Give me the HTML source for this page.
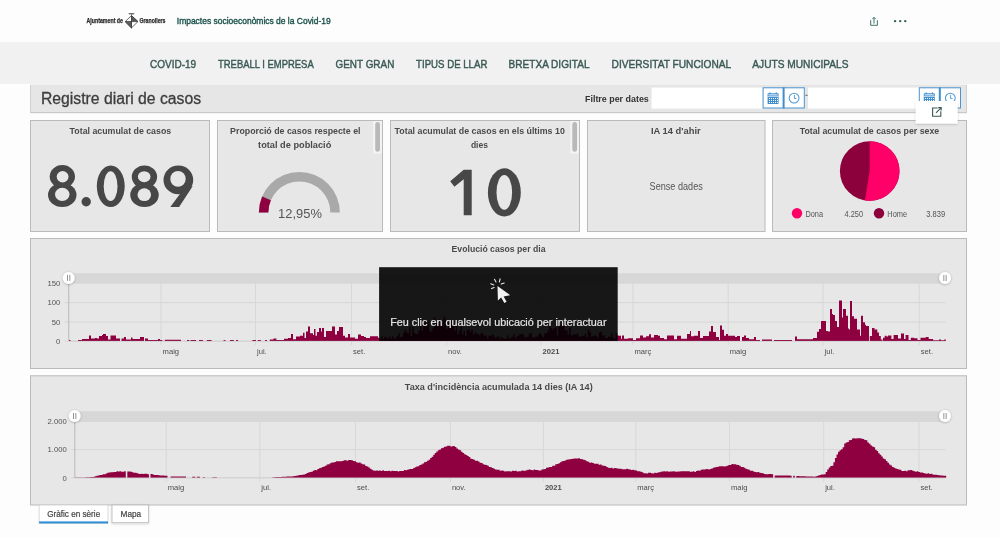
<!DOCTYPE html>
<html><head><meta charset="utf-8"><style>
html,body{margin:0;padding:0;background:#fdfdfd;width:1000px;height:537px;overflow:hidden}
svg{display:block;font-family:"Liberation Sans", sans-serif;will-change:transform;filter:blur(0.5px)}
</style></head><body>
<svg width="1000" height="537" viewBox="0 0 1000 537">
<defs>
<filter id="sh" x="-20%" y="-20%" width="140%" height="160%"><feDropShadow dx="0" dy="1" stdDeviation="1" flood-color="#000" flood-opacity="0.18"/></filter>
<filter id="sh2" x="-50%" y="-50%" width="200%" height="200%"><feDropShadow dx="0" dy="0.5" stdDeviation="0.8" flood-color="#000" flood-opacity="0.3"/></filter>
</defs>
<rect x="0" y="0" width="1000" height="537" fill="#fdfdfd"/><text x="86.50" y="23.20" font-size="6.3" font-weight="bold" fill="#2a2a2a" textLength="36.50" lengthAdjust="spacingAndGlyphs" stroke="#2a2a2a" stroke-width="0.25">Ajuntament de</text><text x="139.50" y="23.20" font-size="6.3" font-weight="bold" fill="#2a2a2a" textLength="26.00" lengthAdjust="spacingAndGlyphs" stroke="#2a2a2a" stroke-width="0.25">Granollers</text><g stroke="#3a3a3a" stroke-width="0.75" fill="#fff"><path d="M131.5 15.6 L137.9 21.6 L131.5 27.9 L125.2 21.6 Z"/><path d="M131.5 15.6 L131.5 27.9" /><path d="M131.5 15.6 L137.9 21.6 L131.5 21.6 Z" fill="#5a5a5a"/><path d="M125.2 21.6 L131.5 21.6 L131.5 27.9 Z" fill="#606060"/></g><path d="M128.3 12.9 H134.6 L133.6 14.6 H129.3 Z" fill="#707070"/><rect x="131.1" y="14.4" width="0.8" height="1.4" fill="#555"/><text x="176.80" y="24.20" font-size="8.9" font-weight="normal" fill="#175048" textLength="153.90" lengthAdjust="spacingAndGlyphs" stroke="#175048" stroke-width="0.35">Impactes socioecon&#242;mics de la Covid-19</text><g stroke="#3a6d66" stroke-width="0.95" fill="none"><path d="M870.7 20.2 V25.3 H877.4 V20.2"/><path d="M874 23.6 V17.6"/><path d="M872.4 19.1 L874 17.3 L875.6 19.1"/></g><circle cx="895.1" cy="21.1" r="1.2" fill="#2f625b"/><circle cx="900.2" cy="21.1" r="1.2" fill="#2f625b"/><circle cx="905.3" cy="21.1" r="1.2" fill="#2f625b"/><rect x="0" y="42" width="1000" height="42" fill="#f1f1f1"/><text x="150.00" y="67.50" font-size="11.8" font-weight="normal" fill="#3b5a55" textLength="46.20" lengthAdjust="spacingAndGlyphs" stroke="#3b5a55" stroke-width="0.45">COVID-19</text><text x="218.00" y="67.50" font-size="11.8" font-weight="normal" fill="#3b5a55" textLength="95.70" lengthAdjust="spacingAndGlyphs" stroke="#3b5a55" stroke-width="0.45">TREBALL I EMPRESA</text><text x="335.50" y="67.50" font-size="11.8" font-weight="normal" fill="#3b5a55" textLength="58.80" lengthAdjust="spacingAndGlyphs" stroke="#3b5a55" stroke-width="0.45">GENT GRAN</text><text x="416.10" y="67.50" font-size="11.8" font-weight="normal" fill="#3b5a55" textLength="71.30" lengthAdjust="spacingAndGlyphs" stroke="#3b5a55" stroke-width="0.45">TIPUS DE LLAR</text><text x="508.60" y="67.50" font-size="11.8" font-weight="normal" fill="#3b5a55" textLength="80.90" lengthAdjust="spacingAndGlyphs" stroke="#3b5a55" stroke-width="0.45">BRETXA DIGITAL</text><text x="611.60" y="67.50" font-size="11.8" font-weight="normal" fill="#3b5a55" textLength="119.60" lengthAdjust="spacingAndGlyphs" stroke="#3b5a55" stroke-width="0.45">DIVERSITAT FUNCIONAL</text><text x="752.30" y="67.50" font-size="11.8" font-weight="normal" fill="#3b5a55" textLength="96.20" lengthAdjust="spacingAndGlyphs" stroke="#3b5a55" stroke-width="0.45">AJUTS MUNICIPALS</text><rect x="30" y="85" width="937" height="28" fill="#e6e6e6"/><rect x="30" y="112" width="937" height="1.2" fill="#c9c9c9"/><rect x="30" y="85" width="1" height="28" fill="#d0d0d0"/><rect x="966" y="85" width="1" height="28" fill="#d0d0d0"/><rect x="30" y="84.6" width="937" height="0.8" fill="#e0e0e0"/><text x="41.00" y="104.00" font-size="16" font-weight="normal" fill="#3d3d3d" textLength="160.00" lengthAdjust="spacingAndGlyphs" stroke="#3d3d3d" stroke-width="0.3">Registre diari de casos</text><text x="585.00" y="102.00" font-size="8.8" font-weight="bold" fill="#333" textLength="63.80" lengthAdjust="spacingAndGlyphs" >Filtre per dates</text><rect x="651.6" y="87.6" width="111" height="21" fill="#fff"/><rect x="808" y="87.6" width="111.5" height="21" fill="#fff"/><rect x="805.5" y="94.8" width="2" height="0.9" fill="#444"/><rect x="763.1" y="87.8" width="41.2" height="20.2" fill="#fff" stroke="#4a94cf" stroke-width="1"/><rect x="782.6" y="87.3" width="2" height="21.1" fill="#3f8fd0"/><rect x="767.6" y="93.3" width="11" height="10.6" rx="0.6" fill="#3f8fd0"/><rect x="768.5" y="94.0" width="9.2" height="1.5" fill="#b9d6ee"/><rect x="767.6" y="95.9" width="11" height="0.7" fill="#fff"/><rect x="769.5" y="92.3" width="1" height="2" fill="#3f8fd0"/><rect x="775.7" y="92.3" width="1" height="2" fill="#3f8fd0"/><g fill="#fff"><rect x="769" y="98" width="1" height="1"/><rect x="769" y="100" width="1" height="1"/><rect x="769" y="102" width="1" height="1"/><rect x="771" y="98" width="1" height="1"/><rect x="771" y="100" width="1" height="1"/><rect x="771" y="102" width="1" height="1"/><rect x="773" y="98" width="1" height="1"/><rect x="773" y="100" width="1" height="1"/><rect x="773" y="102" width="1" height="1"/><rect x="775" y="98" width="1" height="1"/><rect x="775" y="100" width="1" height="1"/><rect x="775" y="102" width="1" height="1"/><rect x="777" y="98" width="1" height="1"/><rect x="777" y="100" width="1" height="1"/><rect x="777" y="102" width="1" height="1"/></g><circle cx="794.1" cy="98.1" r="4.9" fill="none" stroke="#4f9ad4" stroke-width="1.05"/><path d="M794.4 94.89999999999999 V98.5 H796.4" fill="none" stroke="#4f9ad4" stroke-width="0.95"/><rect x="919.3" y="87.8" width="41.2" height="20.2" fill="#fff" stroke="#4a94cf" stroke-width="1"/><rect x="938.8" y="87.3" width="2" height="21.1" fill="#3f8fd0"/><rect x="923.8" y="93.3" width="11" height="10.6" rx="0.6" fill="#3f8fd0"/><rect x="924.6999999999999" y="94.0" width="9.2" height="1.5" fill="#b9d6ee"/><rect x="923.8" y="95.9" width="11" height="0.7" fill="#fff"/><rect x="925.6999999999999" y="92.3" width="1" height="2" fill="#3f8fd0"/><rect x="931.9" y="92.3" width="1" height="2" fill="#3f8fd0"/><g fill="#fff"><rect x="925" y="98" width="1" height="1"/><rect x="925" y="100" width="1" height="1"/><rect x="925" y="102" width="1" height="1"/><rect x="927" y="98" width="1" height="1"/><rect x="927" y="100" width="1" height="1"/><rect x="927" y="102" width="1" height="1"/><rect x="929" y="98" width="1" height="1"/><rect x="929" y="100" width="1" height="1"/><rect x="929" y="102" width="1" height="1"/><rect x="931" y="98" width="1" height="1"/><rect x="931" y="100" width="1" height="1"/><rect x="931" y="102" width="1" height="1"/><rect x="933" y="98" width="1" height="1"/><rect x="933" y="100" width="1" height="1"/><rect x="933" y="102" width="1" height="1"/></g><circle cx="950.3" cy="98.1" r="4.9" fill="none" stroke="#4f9ad4" stroke-width="1.05"/><path d="M950.5999999999999 94.89999999999999 V98.5 H952.5999999999999" fill="none" stroke="#4f9ad4" stroke-width="0.95"/><rect x="30.5" y="120.5" width="179" height="111" fill="#e7e7e7" stroke="#bababa" stroke-width="1"/><rect x="217.5" y="120.5" width="165" height="111" fill="#e7e7e7" stroke="#bababa" stroke-width="1"/><rect x="390.5" y="120.5" width="189" height="111" fill="#e7e7e7" stroke="#bababa" stroke-width="1"/><rect x="587.5" y="120.5" width="177.5" height="111" fill="#e7e7e7" stroke="#bababa" stroke-width="1"/><rect x="772.5" y="120.5" width="194" height="111" fill="#e7e7e7" stroke="#bababa" stroke-width="1"/><rect x="373.2" y="121" width="8.6" height="32.5" fill="#f4f4f4"/><rect x="375.2" y="122" width="4.8" height="29.8" rx="2.4" fill="#b9b9b9"/><rect x="570.3" y="121" width="8.6" height="32.5" fill="#f4f4f4"/><rect x="572.3" y="122" width="4.8" height="29.8" rx="2.4" fill="#b9b9b9"/><text x="69.60" y="134.20" font-size="9.7" font-weight="bold" fill="#4a4a4a" textLength="101.60" lengthAdjust="spacingAndGlyphs" >Total acumulat de casos</text><ellipse cx="62.35" cy="176.6" rx="12.65" ry="11.5" fill="#474747"/><ellipse cx="62.25" cy="195" rx="14.25" ry="12" fill="#474747"/><ellipse cx="62.6" cy="176.75" rx="5.9" ry="5.75" fill="#e7e7e7"/><ellipse cx="62.25" cy="194.35" rx="7.25" ry="6.65" fill="#e7e7e7"/><circle cx="86.2" cy="201.8" r="4.7" fill="#474747"/><ellipse cx="110.75" cy="186.25" rx="13.95" ry="20.75" fill="#474747"/><ellipse cx="110.6" cy="186.15" rx="6.9" ry="14.95" fill="#e7e7e7"/><ellipse cx="144.45" cy="177.0" rx="12.65" ry="11.5" fill="#474747"/><ellipse cx="144.5" cy="195" rx="14.25" ry="12" fill="#474747"/><ellipse cx="144.2" cy="176.7" rx="6.3" ry="5.5" fill="#e7e7e7"/><ellipse cx="144.3" cy="194.7" rx="6.8" ry="6.4" fill="#e7e7e7"/><ellipse cx="178.35" cy="179.9" rx="14.85" ry="14.4" fill="#474747"/><path d="M170.3 207 L179.1 207 L192.8 186 L182.5 190.5 Z" fill="#474747"/><ellipse cx="178" cy="178.9" rx="7.7" ry="7.9" fill="#e7e7e7"/><text x="230.10" y="134.10" font-size="9.7" font-weight="bold" fill="#4a4a4a" textLength="130.40" lengthAdjust="spacingAndGlyphs" >Proporci&#243; de casos respecte el</text><text x="258.10" y="148.20" font-size="9.7" font-weight="bold" fill="#4a4a4a" textLength="73.20" lengthAdjust="spacingAndGlyphs" >total de poblaci&#243;</text><path d="M258.85 212.40 A40.5 40.5 0 0 1 339.85 212.40 L330.35 212.40 A31 31 0 0 0 268.35 212.40 Z" fill="#a9a9a9"/><path d="M258.85 212.40 A40.5 40.5 0 0 1 262.15 196.38 L270.88 200.14 A31 31 0 0 0 268.35 212.40 Z" fill="#8e0040"/><text x="278.10" y="217.60" font-size="13" font-weight="normal" fill="#555" textLength="43.80" lengthAdjust="spacingAndGlyphs" >12,95%</text><text x="394.60" y="134.20" font-size="9.7" font-weight="bold" fill="#4a4a4a" textLength="170.20" lengthAdjust="spacingAndGlyphs" >Total acumulat de casos en els &#250;ltims 10</text><text x="470.90" y="147.70" font-size="9.7" font-weight="bold" fill="#4a4a4a" textLength="17.10" lengthAdjust="spacingAndGlyphs" >dies</text><path d="M450.2 181.3 L463.7 169.8 L471.7 169.8 L471.7 215.2 L463.7 215.2 L463.7 179.2 L454.4 186.8 Z" fill="#474747"/><ellipse cx="504.35" cy="192.4" rx="16.45" ry="24.1" fill="#474747"/><ellipse cx="504.3" cy="192.4" rx="7.8" ry="17.4" fill="#e7e7e7"/><text x="651.00" y="134.20" font-size="9.7" font-weight="bold" fill="#4a4a4a" textLength="49.70" lengthAdjust="spacingAndGlyphs" >IA 14 d'ahir</text><text x="649.60" y="189.90" font-size="10.6" font-weight="normal" fill="#555" textLength="53.20" lengthAdjust="spacingAndGlyphs" >Sense dades</text><text x="799.70" y="134.20" font-size="9.7" font-weight="bold" fill="#4a4a4a" textLength="139.50" lengthAdjust="spacingAndGlyphs" >Total acumulat de casos per sexe</text><circle cx="869.7" cy="171" r="29.8" fill="#8c003c"/><path d="M869.7 171 L869.7 141.2 A29.8 29.8 0 1 1 864.96 200.42 Z" fill="#ff0068"/><circle cx="797" cy="213.2" r="5.2" fill="#ff0068"/><circle cx="879" cy="213.2" r="5.2" fill="#8c003c"/><text x="805.40" y="217.00" font-size="8.6" font-weight="normal" fill="#555" textLength="17.60" lengthAdjust="spacingAndGlyphs" >Dona</text><text x="844.60" y="217.00" font-size="8.6" font-weight="normal" fill="#555" textLength="18.50" lengthAdjust="spacingAndGlyphs" >4.250</text><text x="887.30" y="217.00" font-size="8.6" font-weight="normal" fill="#555" textLength="19.80" lengthAdjust="spacingAndGlyphs" >Home</text><text x="926.30" y="217.00" font-size="8.6" font-weight="normal" fill="#555" textLength="18.80" lengthAdjust="spacingAndGlyphs" >3.839</text><rect x="915.6" y="101" width="42" height="22.6" fill="#fff" filter="url(#sh)"/><g fill="none" stroke="#3b5a55" stroke-width="1.1"><path d="M937.7 108 H932.6 V116.3 H940.8 V111.3"/><path d="M936 112.8 L941 107.8 M938.2 107.6 H941.2 V110.6"/></g><rect x="30.5" y="238.5" width="936" height="130.0" fill="#e7e7e7" stroke="#bababa" stroke-width="1"/><rect x="30.5" y="375.8" width="936" height="129.2" fill="#e7e7e7" stroke="#bababa" stroke-width="1"/><text x="451.60" y="252.40" font-size="9.3" font-weight="bold" fill="#4a4a4a" textLength="93.90" lengthAdjust="spacingAndGlyphs" >Evoluci&#243; casos per dia</text><text x="404.80" y="390.00" font-size="9.3" font-weight="bold" fill="#4a4a4a" textLength="187.90" lengthAdjust="spacingAndGlyphs" >Taxa d'incid&#232;ncia acumulada 14 dies (IA 14)</text><rect x="68.7" y="273.2" width="876.8" height="9.900000000000034" fill="#d7d7d7"/><rect x="64.7" y="282.5" width="880.8" height="1" fill="#d6d6d6"/><text x="60.30" y="285.70" font-size="7.7" font-weight="normal" fill="#525252" text-anchor="end">150</text><rect x="64.7" y="302.1" width="880.8" height="1" fill="#d6d6d6"/><text x="60.30" y="305.30" font-size="7.7" font-weight="normal" fill="#525252" text-anchor="end">100</text><rect x="64.7" y="321.6" width="880.8" height="1" fill="#d6d6d6"/><text x="60.30" y="324.80" font-size="7.7" font-weight="normal" fill="#525252" text-anchor="end">50</text><rect x="64.7" y="340.6" width="880.8" height="1" fill="#d6d6d6"/><text x="60.30" y="343.80" font-size="7.7" font-weight="normal" fill="#525252" text-anchor="end">0</text><rect x="160.6" y="283.1" width="1" height="62.0" fill="#d8d8d8"/><text x="162.60" y="353.80" font-size="7.6" font-weight="normal" fill="#4d4d4d">maig</text><rect x="255.0" y="283.1" width="1" height="62.0" fill="#d8d8d8"/><text x="257.00" y="353.80" font-size="7.6" font-weight="normal" fill="#4d4d4d">jul.</text><rect x="351.0" y="283.1" width="1" height="62.0" fill="#d8d8d8"/><text x="353.00" y="353.80" font-size="7.6" font-weight="normal" fill="#4d4d4d">set.</text><rect x="446.1" y="283.1" width="1" height="62.0" fill="#d8d8d8"/><text x="448.10" y="353.80" font-size="7.6" font-weight="normal" fill="#4d4d4d">nov.</text><rect x="540.5" y="283.1" width="1" height="62.0" fill="#d8d8d8"/><text x="542.50" y="353.80" font-size="7.6" font-weight="bold" fill="#4d4d4d">2021</text><rect x="632.4" y="283.1" width="1" height="62.0" fill="#d8d8d8"/><text x="634.40" y="353.80" font-size="7.6" font-weight="normal" fill="#4d4d4d">mar&#231;</text><rect x="727.7" y="283.1" width="1" height="62.0" fill="#d8d8d8"/><text x="729.70" y="353.80" font-size="7.6" font-weight="normal" fill="#4d4d4d">maig</text><rect x="822.6" y="283.1" width="1" height="62.0" fill="#d8d8d8"/><text x="824.60" y="353.80" font-size="7.6" font-weight="normal" fill="#4d4d4d">jul.</text><rect x="918.8" y="283.1" width="1" height="62.0" fill="#d8d8d8"/><text x="920.80" y="353.80" font-size="7.6" font-weight="normal" fill="#4d4d4d">set.</text><rect x="68.10000000000001" y="283.1" width="1.2" height="58.0" fill="#c0c0c0"/><path fill="#8e0040" d="M69.00 341.1 L69.00 340.10 L70.50 340.10 L70.50 341.1 Z M78.00 341.1 L78.00 339.90 L82.00 339.90 L82.00 338.90 L89.00 338.90 L89.00 335.40 L91.00 335.40 L91.00 338.40 L95.00 338.40 L95.00 337.90 L97.00 337.90 L97.00 338.60 L99.00 338.60 L99.00 335.90 L102.00 335.90 L102.00 335.10 L103.00 335.10 L103.00 333.90 L106.00 333.90 L106.00 335.90 L108.00 335.90 L108.00 339.40 L110.50 339.40 L110.50 335.40 L116.00 335.40 L116.00 338.40 L120.00 338.40 L120.00 341.1 Z M121.50 341.1 L121.50 338.40 L124.00 338.40 L124.00 336.90 L126.00 336.90 L126.00 339.40 L131.00 339.40 L131.00 337.40 L132.50 337.40 L132.50 338.90 L140.00 338.90 L140.00 336.90 L144.00 336.90 L144.00 341.1 Z M145.00 341.1 L145.00 338.40 L148.00 338.40 L148.00 339.90 L158.00 339.90 L158.00 338.90 L160.00 338.90 L160.00 340.10 L162.40 340.10 L162.40 341.1 Z M164.80 341.1 L164.80 339.80 L181.00 339.80 L181.00 341.1 Z M187.00 341.1 L187.00 340.10 L189.40 340.10 L189.40 341.1 Z M190.60 341.1 L190.60 340.10 L196.00 340.10 L196.00 341.1 Z M199.00 341.1 L199.00 340.10 L203.00 340.10 L203.00 341.1 Z M206.80 341.1 L206.80 340.10 L211.60 340.10 L211.60 341.1 Z M223.60 341.1 L223.60 340.10 L225.40 340.10 L225.40 341.1 Z M230.00 341.1 L230.00 340.10 L233.80 340.10 L233.80 341.1 Z M236.00 341.1 L236.00 340.10 L238.00 340.10 L238.00 341.1 Z M252.40 341.1 L252.40 340.10 L256.00 340.10 L256.00 341.1 Z M257.80 341.1 L257.80 340.10 L260.80 340.10 L260.80 341.1 Z M265.00 341.1 L265.00 340.10 L267.00 340.10 L267.00 341.1 Z M269.80 341.1 L269.80 339.60 L273.40 339.60 L273.40 338.50 L276.40 338.50 L276.40 339.90 L284.00 339.90 L284.00 338.70 L288.00 338.70 L288.00 338.10 L291.00 338.10 L291.00 334.10 L293.00 334.10 L293.00 339.30 L296.00 339.30 L296.00 336.60 L300.00 336.60 L300.00 335.70 L303.00 335.70 L303.00 332.70 L304.50 332.70 L304.50 338.10 L306.00 338.10 L306.00 331.50 L308.00 331.50 L308.00 326.50 L310.00 326.50 L310.00 333.30 L313.00 333.30 L313.00 335.10 L314.00 335.10 L314.00 328.90 L315.50 328.90 L315.50 335.70 L317.00 335.70 L317.00 332.10 L319.00 332.10 L319.00 327.90 L321.00 327.90 L321.00 331.50 L322.00 331.50 L322.00 327.90 L324.00 327.90 L324.00 336.90 L326.00 336.90 L326.00 330.90 L332.00 330.90 L332.00 326.50 L335.00 326.50 L335.00 334.50 L337.00 334.50 L337.00 331.10 L339.00 331.10 L339.00 327.10 L343.00 327.10 L343.00 335.70 L345.00 335.70 L345.00 337.50 L348.00 337.50 L348.00 334.10 L350.00 334.10 L350.00 337.50 L355.00 337.50 L355.00 338.70 L358.00 338.70 L358.00 334.50 L361.00 334.50 L361.00 336.10 L364.00 336.10 L364.00 336.90 L366.00 336.90 L366.00 338.10 L370.00 338.10 L370.00 336.30 L378.00 336.30 L378.00 337.75 L379.55 337.75 L379.55 338.55 L381.10 338.55 L381.10 336.18 L382.65 336.18 L382.65 338.90 L384.20 338.90 L384.20 336.69 L385.75 336.69 L385.75 337.46 L387.30 337.46 L387.30 338.87 L388.90 338.87 L388.90 336.49 L390.45 336.49 L390.45 338.83 L392.00 338.83 L392.00 336.59 L393.55 336.59 L393.55 338.48 L395.10 338.48 L395.10 338.25 L396.65 338.25 L396.65 336.11 L398.20 336.11 L398.20 333.24 L399.75 333.24 L399.75 337.52 L401.30 337.52 L401.30 336.53 L402.85 336.53 L402.85 333.04 L404.40 333.04 L404.40 329.77 L405.95 329.77 L405.95 332.33 L407.55 332.33 L407.55 333.50 L409.10 333.50 L409.10 327.09 L410.65 327.09 L410.65 336.35 L412.20 336.35 L412.20 326.81 L413.75 326.81 L413.75 332.91 L415.30 332.91 L415.30 334.34 L416.85 334.34 L416.85 334.10 L418.40 334.10 L418.40 330.57 L419.95 330.57 L419.95 321.36 L421.50 321.36 L421.50 331.01 L423.05 331.01 L423.05 323.11 L424.60 323.11 L424.60 321.25 L426.15 321.25 L426.15 325.79 L427.75 325.79 L427.75 321.55 L429.30 321.55 L429.30 331.48 L430.85 331.48 L430.85 331.38 L432.40 331.38 L432.40 328.02 L433.95 328.02 L433.95 317.27 L435.50 317.27 L435.50 322.92 L437.05 322.92 L437.05 325.47 L438.60 325.47 L438.60 319.49 L440.15 319.49 L440.15 322.54 L441.70 322.54 L441.70 326.36 L443.25 326.36 L443.25 316.59 L444.80 316.59 L444.80 319.27 L446.40 319.27 L446.40 328.83 L447.95 328.83 L447.95 323.31 L449.50 323.31 L449.50 325.02 L451.05 325.02 L451.05 320.00 L452.60 320.00 L452.60 323.36 L454.15 323.36 L454.15 330.86 L455.70 330.86 L455.70 321.47 L457.25 321.47 L457.25 334.20 L458.80 334.20 L458.80 330.61 L460.35 330.61 L460.35 326.71 L461.90 326.71 L461.90 334.53 L463.45 334.53 L463.45 330.83 L465.00 330.83 L465.00 336.29 L466.60 336.29 L466.60 329.84 L468.15 329.84 L468.15 329.44 L469.70 329.44 L469.70 331.90 L471.25 331.90 L471.25 329.59 L472.80 329.59 L472.80 335.00 L474.35 335.00 L474.35 332.17 L475.90 332.17 L475.90 333.43 L477.45 333.43 L477.45 333.99 L479.00 333.99 L479.00 335.29 L480.55 335.29 L480.55 333.24 L482.10 333.24 L482.10 333.19 L483.65 333.19 L483.65 336.18 L485.25 336.18 L485.25 335.33 L486.80 335.33 L486.80 338.72 L488.35 338.72 L488.35 335.59 L489.90 335.59 L489.90 335.99 L491.45 335.99 L491.45 334.47 L493.00 334.47 L493.00 335.44 L494.55 335.44 L494.55 338.02 L496.10 338.02 L496.10 337.53 L497.65 337.53 L497.65 336.20 L499.20 336.20 L499.20 339.18 L500.75 339.18 L500.75 337.11 L502.30 337.11 L502.30 338.47 L503.85 338.47 L503.85 338.70 L505.45 338.70 L505.45 338.96 L507.00 338.96 L507.00 335.51 L508.55 335.51 L508.55 338.52 L510.10 338.52 L510.10 337.85 L511.65 337.85 L511.65 337.03 L513.20 337.03 L513.20 334.36 L514.75 334.36 L514.75 338.52 L516.30 338.52 L516.30 336.39 L517.85 336.39 L517.85 335.86 L519.40 335.86 L519.40 334.05 L520.95 334.05 L520.95 334.46 L522.50 334.46 L522.50 334.27 L524.10 334.27 L524.10 337.48 L525.65 337.48 L525.65 336.78 L527.20 336.78 L527.20 337.01 L528.75 337.01 L528.75 333.76 L530.30 333.76 L530.30 332.93 L531.85 332.93 L531.85 337.65 L533.40 337.65 L533.40 337.29 L534.95 337.29 L534.95 336.70 L536.50 336.70 L536.50 336.47 L538.05 336.47 L538.05 334.24 L539.60 334.24 L539.60 333.00 L541.15 333.00 L541.15 335.41 L542.70 335.41 L542.70 337.45 L544.30 337.45 L544.30 333.17 L545.85 333.17 L545.85 333.23 L547.40 333.23 L547.40 330.67 L548.95 330.67 L548.95 325.77 L550.50 325.77 L550.50 328.20 L552.05 328.20 L552.05 329.85 L553.60 329.85 L553.60 328.28 L555.15 328.28 L555.15 327.21 L556.70 327.21 L556.70 335.17 L558.25 335.17 L558.25 323.74 L559.80 323.74 L559.80 325.19 L561.35 325.19 L561.35 323.74 L562.95 323.74 L562.95 324.82 L564.50 324.82 L564.50 330.44 L566.05 330.44 L566.05 330.42 L567.60 330.42 L567.60 334.49 L569.15 334.49 L569.15 327.67 L570.70 327.67 L570.70 335.28 L572.25 335.28 L572.25 335.36 L573.80 335.36 L573.80 333.90 L575.35 333.90 L575.35 334.75 L576.90 334.75 L576.90 333.09 L578.45 333.09 L578.45 336.37 L580.00 336.37 L580.00 337.05 L581.55 337.05 L581.55 335.65 L583.15 335.65 L583.15 336.27 L584.70 336.27 L584.70 333.86 L586.25 333.86 L586.25 337.19 L587.80 337.19 L587.80 329.59 L589.35 329.59 L589.35 332.31 L590.90 332.31 L590.90 336.57 L592.45 336.57 L592.45 335.93 L594.00 335.93 L594.00 335.49 L595.55 335.49 L595.55 335.69 L597.10 335.69 L597.10 337.64 L598.65 337.64 L598.65 332.80 L600.20 332.80 L600.20 331.90 L601.80 331.90 L601.80 335.44 L603.35 335.44 L603.35 335.36 L604.90 335.36 L604.90 337.99 L606.45 337.99 L606.45 337.90 L608.00 337.90 L608.00 336.39 L609.55 336.39 L609.55 336.93 L611.10 336.93 L611.10 333.42 L612.65 333.42 L612.65 337.66 L614.20 337.66 L614.20 338.55 L615.75 338.55 L615.75 332.92 L617.30 332.92 L617.30 335.56 L618.85 335.56 L618.85 335.70 L621.00 335.70 L621.00 338.70 L622.00 338.70 L622.00 335.50 L624.00 335.50 L624.00 338.70 L628.00 338.70 L628.00 338.30 L633.00 338.30 L633.00 339.90 L636.00 339.90 L636.00 338.30 L640.00 338.30 L640.00 335.50 L643.00 335.50 L643.00 337.50 L646.00 337.50 L646.00 336.30 L649.00 336.30 L649.00 334.30 L651.00 334.30 L651.00 337.50 L654.00 337.50 L654.00 334.90 L658.00 334.90 L658.00 335.70 L660.00 335.70 L660.00 337.90 L664.00 337.90 L664.00 339.30 L667.00 339.30 L667.00 335.50 L674.00 335.50 L674.00 339.30 L677.00 339.30 L677.00 335.70 L681.00 335.70 L681.00 338.70 L687.00 338.70 L687.00 333.90 L690.00 333.90 L690.00 330.90 L691.00 330.90 L691.00 336.30 L694.00 336.30 L694.00 335.70 L698.00 335.70 L698.00 330.90 L700.00 330.90 L700.00 338.10 L703.00 338.10 L703.00 335.90 L709.00 335.90 L709.00 331.50 L711.00 331.50 L711.00 326.10 L713.00 326.10 L713.00 332.10 L716.00 332.10 L716.00 336.90 L719.00 336.90 L719.00 339.90 L720.00 339.90 L720.00 325.50 L722.00 325.50 L722.00 329.70 L724.00 329.70 L724.00 335.70 L726.00 335.70 L726.00 333.90 L728.00 333.90 L728.00 335.70 L735.00 335.70 L735.00 336.90 L737.00 336.90 L737.00 335.90 L740.00 335.90 L740.00 341.1 Z M742.00 341.1 L742.00 336.90 L744.00 336.90 L744.00 335.40 L746.00 335.40 L746.00 338.10 L749.00 338.10 L749.00 339.30 L754.00 339.30 L754.00 336.90 L756.00 336.90 L756.00 339.90 L760.00 339.90 L760.00 341.1 Z M762.00 341.1 L762.00 339.50 L772.00 339.50 L772.00 341.1 Z M774.00 341.1 L774.00 339.90 L792.00 339.90 L792.00 341.1 Z M795.00 341.1 L795.00 336.60 L797.00 336.60 L797.00 339.30 L813.00 339.30 L813.00 338.10 L817.00 338.10 L817.00 331.80 L819.00 331.80 L819.00 329.10 L821.00 329.10 L821.00 321.10 L826.00 321.10 L826.00 331.10 L828.00 331.10 L828.00 331.40 L830.00 331.40 L830.00 309.10 L832.00 309.10 L832.00 314.10 L833.00 314.10 L833.00 315.10 L835.00 315.10 L835.00 321.10 L837.00 321.10 L837.00 327.10 L839.00 327.10 L839.00 300.60 L842.00 300.60 L842.00 317.50 L843.00 317.50 L843.00 309.10 L846.00 309.10 L846.00 315.70 L848.00 315.70 L848.00 328.40 L849.00 328.40 L849.00 329.60 L850.00 329.60 L850.00 301.10 L852.00 301.10 L852.00 316.30 L854.00 316.30 L854.00 318.70 L857.00 318.70 L857.00 329.60 L860.00 329.60 L860.00 335.70 L861.00 335.70 L861.00 315.70 L863.00 315.70 L863.00 322.30 L865.00 322.30 L865.00 324.80 L866.00 324.80 L866.00 326.00 L869.00 326.00 L869.00 341.1 Z M869.80 341.1 L869.80 336.10 L872.00 336.10 L872.00 328.10 L874.50 328.10 L874.50 329.60 L877.30 329.60 L877.30 332.60 L879.00 332.60 L879.00 336.10 L880.80 336.10 L880.80 339.60 L882.50 339.60 L882.50 341.1 Z M883.00 341.1 L883.00 337.70 L884.70 337.70 L884.70 335.70 L886.50 335.70 L886.50 336.50 L888.00 336.50 L888.00 335.50 L891.40 335.50 L891.40 339.10 L893.60 339.10 L893.60 335.10 L898.00 335.10 L898.00 338.40 L901.00 338.40 L901.00 333.60 L904.00 333.60 L904.00 339.10 L905.60 339.10 L905.60 335.10 L908.50 335.10 L908.50 339.90 L910.80 339.90 L910.80 337.70 L914.00 337.70 L914.00 338.30 L917.50 338.30 L917.50 339.90 L920.50 339.90 L920.50 337.70 L925.70 337.70 L925.70 336.90 L928.70 336.90 L928.70 339.10 L933.10 339.10 L933.10 340.20 L939.00 340.20 L939.00 339.60 L941.00 339.60 L941.00 340.20 L944.30 340.20 L944.30 339.60 L945.80 339.60 L945.80 341.1 Z"/><rect x="68.7" y="340.8" width="876.8" height="0.8" fill="#c8c8c8" opacity="0.6"/><circle cx="68.7" cy="277.9" r="6" fill="#fff" filter="url(#sh2)"/><rect x="67.10000000000001" y="274.9" width="0.9" height="6" fill="#888"/><rect x="69.4" y="274.9" width="0.9" height="6" fill="#888"/><circle cx="945" cy="278" r="6" fill="#fff" filter="url(#sh2)"/><rect x="943.4" y="275" width="0.9" height="6" fill="#888"/><rect x="945.7" y="275" width="0.9" height="6" fill="#888"/><rect x="74.8" y="411.2" width="870.7" height="9.699999999999989" fill="#d7d7d7"/><rect x="70.8" y="420.9" width="874.7" height="1" fill="#d6d6d6"/><text x="66.80" y="424.10" font-size="7.7" font-weight="normal" fill="#525252" text-anchor="end">2.000</text><rect x="70.8" y="449.1" width="874.7" height="1" fill="#d6d6d6"/><text x="66.80" y="452.30" font-size="7.7" font-weight="normal" fill="#525252" text-anchor="end">1.000</text><rect x="70.8" y="477.3" width="874.7" height="1" fill="#d6d6d6"/><text x="66.80" y="480.50" font-size="7.7" font-weight="normal" fill="#525252" text-anchor="end">0</text><rect x="165.7" y="420.9" width="1" height="60.900000000000034" fill="#d8d8d8"/><text x="167.70" y="489.80" font-size="7.6" font-weight="normal" fill="#4d4d4d">maig</text><rect x="259.3" y="420.9" width="1" height="60.900000000000034" fill="#d8d8d8"/><text x="261.30" y="489.80" font-size="7.6" font-weight="normal" fill="#4d4d4d">jul.</text><rect x="355.0" y="420.9" width="1" height="60.900000000000034" fill="#d8d8d8"/><text x="357.00" y="489.80" font-size="7.6" font-weight="normal" fill="#4d4d4d">set.</text><rect x="449.9" y="420.9" width="1" height="60.900000000000034" fill="#d8d8d8"/><text x="451.90" y="489.80" font-size="7.6" font-weight="normal" fill="#4d4d4d">nov.</text><rect x="542.9" y="420.9" width="1" height="60.900000000000034" fill="#d8d8d8"/><text x="544.90" y="489.80" font-size="7.6" font-weight="bold" fill="#4d4d4d">2021</text><rect x="635.3" y="420.9" width="1" height="60.900000000000034" fill="#d8d8d8"/><text x="637.30" y="489.80" font-size="7.6" font-weight="normal" fill="#4d4d4d">mar&#231;</text><rect x="729.0" y="420.9" width="1" height="60.900000000000034" fill="#d8d8d8"/><text x="731.00" y="489.80" font-size="7.6" font-weight="normal" fill="#4d4d4d">maig</text><rect x="823.2" y="420.9" width="1" height="60.900000000000034" fill="#d8d8d8"/><text x="825.20" y="489.80" font-size="7.6" font-weight="normal" fill="#4d4d4d">jul.</text><rect x="918.4" y="420.9" width="1" height="60.900000000000034" fill="#d8d8d8"/><text x="920.40" y="489.80" font-size="7.6" font-weight="normal" fill="#4d4d4d">set.</text><rect x="74.2" y="420.9" width="1.2" height="56.900000000000034" fill="#c0c0c0"/><path fill="#8e0040" d="M74.80 477.8 L74.80 477.59 L76.34 477.59 L76.34 477.58 L77.89 477.58 L77.89 477.56 L79.44 477.56 L79.44 477.54 L80.98 477.54 L80.98 477.52 L82.53 477.52 L82.53 477.51 L84.07 477.51 L84.07 477.45 L85.62 477.45 L85.62 477.37 L87.16 477.37 L87.16 477.28 L88.71 477.28 L88.71 477.20 L90.25 477.20 L90.25 477.11 L91.80 477.11 L91.80 477.02 L93.34 477.02 L93.34 476.70 L94.89 476.70 L94.89 476.28 L96.43 476.28 L96.43 475.86 L97.98 475.86 L97.98 475.44 L99.52 475.44 L99.52 475.03 L101.07 475.03 L101.07 474.98 L102.61 474.98 L102.61 474.26 L104.16 474.26 L104.16 474.36 L105.70 474.36 L105.70 473.54 L107.25 473.54 L107.25 472.77 L108.79 472.77 L108.79 472.52 L110.34 472.52 L110.34 472.31 L111.88 472.31 L111.88 472.35 L113.43 472.35 L113.43 471.90 L114.97 471.90 L114.97 471.88 L116.52 471.88 L116.52 471.31 L118.06 471.31 L118.06 471.49 L119.61 471.49 L119.61 471.26 L121.15 471.26 L121.15 471.69 L122.70 471.69 L122.70 471.82 L124.24 471.82 L124.24 471.32 L125.79 471.32 L125.79 477.8 Z M127.33 477.8 L127.33 471.47 L128.88 471.47 L128.88 471.60 L130.42 471.60 L130.42 471.81 L131.97 471.81 L131.97 472.13 L133.51 472.13 L133.51 472.84 L135.06 472.84 L135.06 472.83 L136.60 472.83 L136.60 473.23 L138.14 473.23 L138.14 473.73 L139.69 473.73 L139.69 473.91 L141.23 473.91 L141.23 473.86 L142.78 473.86 L142.78 474.05 L144.32 474.05 L144.32 473.83 L145.87 473.83 L145.87 473.69 L147.41 473.69 L147.41 474.24 L148.96 474.24 L148.96 477.8 Z M150.50 477.8 L150.50 474.00 L152.05 474.00 L152.05 474.20 L153.59 474.20 L153.59 474.90 L155.14 474.90 L155.14 474.95 L156.68 474.95 L156.68 475.12 L158.23 475.12 L158.23 475.29 L159.77 475.29 L159.77 475.43 L161.32 475.43 L161.32 475.52 L162.86 475.52 L162.86 475.61 L164.41 475.61 L164.41 475.70 L165.95 475.70 L165.95 475.78 L167.50 475.78 L167.50 477.8 Z M170.59 477.8 L170.59 476.40 L172.13 476.40 L172.13 476.40 L173.68 476.40 L173.68 476.40 L175.22 476.40 L175.22 476.40 L176.77 476.40 L176.77 476.40 L178.31 476.40 L178.31 476.40 L179.86 476.40 L179.86 476.40 L181.40 476.40 L181.40 476.40 L182.95 476.40 L182.95 476.40 L184.49 476.40 L184.49 476.40 L186.04 476.40 L186.04 477.8 Z M192.22 477.8 L192.22 476.71 L193.76 476.71 L193.76 476.73 L195.31 476.73 L195.31 477.8 Z M196.85 477.8 L196.85 476.77 L198.40 476.77 L198.40 476.79 L199.94 476.79 L199.94 477.8 Z M203.03 477.8 L203.03 476.95 L204.58 476.95 L204.58 477.8 Z M212.30 477.8 L212.30 477.23 L213.85 477.23 L213.85 477.25 L215.39 477.25 L215.39 477.26 L216.94 477.26 L216.94 477.8 Z M272.56 477.8 L272.56 477.30 L274.10 477.30 L274.10 477.16 L275.65 477.16 L275.65 477.09 L277.19 477.09 L277.19 477.02 L278.74 477.02 L278.74 476.96 L280.28 476.96 L280.28 476.89 L281.83 476.89 L281.83 476.82 L283.37 476.82 L283.37 476.75 L284.92 476.75 L284.92 476.68 L286.46 476.68 L286.46 476.61 L288.01 476.61 L288.01 476.54 L289.55 476.54 L289.55 476.47 L291.10 476.47 L291.10 476.41 L292.64 476.41 L292.64 476.16 L294.19 476.16 L294.19 475.91 L295.73 475.91 L295.73 475.65 L297.28 475.65 L297.28 475.39 L298.82 475.39 L298.82 475.08 L300.37 475.08 L300.37 475.02 L301.91 475.02 L301.91 474.71 L303.46 474.71 L303.46 474.40 L305.00 474.40 L305.00 473.93 L306.55 473.93 L306.55 473.09 L308.09 473.09 L308.09 472.38 L309.64 472.38 L309.64 471.93 L311.18 471.93 L311.18 471.64 L312.73 471.64 L312.73 470.86 L314.27 470.86 L314.27 470.11 L315.82 470.11 L315.82 470.14 L317.36 470.14 L317.36 469.00 L318.91 469.00 L318.91 468.16 L320.45 468.16 L320.45 467.65 L322.00 467.65 L322.00 466.96 L323.54 466.96 L323.54 466.38 L325.09 466.38 L325.09 465.83 L326.63 465.83 L326.63 464.46 L328.18 464.46 L328.18 464.20 L329.72 464.20 L329.72 463.21 L331.27 463.21 L331.27 462.49 L332.81 462.49 L332.81 462.44 L334.36 462.44 L334.36 462.06 L335.90 462.06 L335.90 461.26 L337.45 461.26 L337.45 461.15 L338.99 461.15 L338.99 461.34 L340.54 461.34 L340.54 461.20 L342.08 461.20 L342.08 461.03 L343.63 461.03 L343.63 460.20 L345.17 460.20 L345.17 460.13 L346.72 460.13 L346.72 460.72 L348.26 460.72 L348.26 460.11 L349.81 460.11 L349.81 459.97 L351.36 459.97 L351.36 460.30 L352.90 460.30 L352.90 461.04 L354.45 461.04 L354.45 461.32 L355.99 461.32 L355.99 462.16 L357.54 462.16 L357.54 462.76 L359.08 462.76 L359.08 462.52 L360.63 462.52 L360.63 463.42 L362.17 463.42 L362.17 464.15 L363.72 464.15 L363.72 464.50 L365.26 464.50 L365.26 465.88 L366.81 465.88 L366.81 466.41 L368.35 466.41 L368.35 467.38 L369.90 467.38 L369.90 468.87 L371.44 468.87 L371.44 469.78 L372.99 469.78 L372.99 470.59 L374.53 470.59 L374.53 470.67 L376.08 470.67 L376.08 470.40 L377.62 470.40 L377.62 470.73 L379.17 470.73 L379.17 470.62 L380.71 470.62 L380.71 470.92 L382.26 470.92 L382.26 470.33 L383.80 470.33 L383.80 470.99 L385.35 470.99 L385.35 471.05 L386.89 471.05 L386.89 471.09 L388.44 471.09 L388.44 470.82 L389.98 470.82 L389.98 471.23 L391.53 471.23 L391.53 470.75 L393.07 470.75 L393.07 471.10 L394.62 471.10 L394.62 471.05 L396.16 471.05 L396.16 471.03 L397.71 471.03 L397.71 471.46 L399.25 471.46 L399.25 471.05 L400.80 471.05 L400.80 471.05 L402.34 471.05 L402.34 470.98 L403.89 470.98 L403.89 470.03 L405.43 470.03 L405.43 470.35 L406.98 470.35 L406.98 469.77 L408.52 469.77 L408.52 469.24 L410.07 469.24 L410.07 469.08 L411.61 469.08 L411.61 468.88 L413.16 468.88 L413.16 468.02 L414.70 468.02 L414.70 467.29 L416.25 467.29 L416.25 466.39 L417.79 466.39 L417.79 466.25 L419.34 466.25 L419.34 464.99 L420.88 464.99 L420.88 464.42 L422.43 464.42 L422.43 463.54 L423.97 463.54 L423.97 462.25 L425.52 462.25 L425.52 461.63 L427.06 461.63 L427.06 460.74 L428.61 460.74 L428.61 459.71 L430.15 459.71 L430.15 458.12 L431.70 458.12 L431.70 456.69 L433.24 456.69 L433.24 454.68 L434.79 454.68 L434.79 452.93 L436.33 452.93 L436.33 451.60 L437.88 451.60 L437.88 450.33 L439.42 450.33 L439.42 449.44 L440.97 449.44 L440.97 448.26 L442.51 448.26 L442.51 447.69 L444.06 447.69 L444.06 446.76 L445.60 446.76 L445.60 446.46 L447.15 446.46 L447.15 445.79 L448.69 445.79 L448.69 445.75 L450.24 445.75 L450.24 446.42 L451.78 446.42 L451.78 446.20 L453.33 446.20 L453.33 445.96 L454.87 445.96 L454.87 446.98 L456.42 446.98 L456.42 448.54 L457.96 448.54 L457.96 449.48 L459.51 449.48 L459.51 450.18 L461.05 450.18 L461.05 451.77 L462.60 451.77 L462.60 452.88 L464.14 452.88 L464.14 454.30 L465.69 454.30 L465.69 454.97 L467.23 454.97 L467.23 455.95 L468.78 455.95 L468.78 456.93 L470.32 456.93 L470.32 458.68 L471.87 458.68 L471.87 459.06 L473.41 459.06 L473.41 459.73 L474.96 459.73 L474.96 460.81 L476.50 460.81 L476.50 460.76 L478.05 460.76 L478.05 461.39 L479.59 461.39 L479.59 462.83 L481.14 462.83 L481.14 462.95 L482.68 462.95 L482.68 464.22 L484.23 464.22 L484.23 464.81 L485.77 464.81 L485.77 464.98 L487.32 464.98 L487.32 465.74 L488.86 465.74 L488.86 466.96 L490.41 466.96 L490.41 467.37 L491.95 467.37 L491.95 467.97 L493.50 467.97 L493.50 468.79 L495.04 468.79 L495.04 469.59 L496.59 469.59 L496.59 469.83 L498.13 469.83 L498.13 469.78 L499.68 469.78 L499.68 470.72 L501.22 470.72 L501.22 470.55 L502.77 470.55 L502.77 470.83 L504.31 470.83 L504.31 471.39 L505.86 471.39 L505.86 471.29 L507.40 471.29 L507.40 471.18 L508.95 471.18 L508.95 471.25 L510.49 471.25 L510.49 471.61 L512.04 471.61 L512.04 470.74 L513.58 470.74 L513.58 470.88 L515.13 470.88 L515.13 470.68 L516.67 470.68 L516.67 471.42 L518.22 471.42 L518.22 471.24 L519.76 471.24 L519.76 471.35 L521.31 471.35 L521.31 470.50 L522.85 470.50 L522.85 470.77 L524.40 470.77 L524.40 470.71 L525.94 470.71 L525.94 470.26 L527.49 470.26 L527.49 469.64 L529.03 469.64 L529.03 469.54 L530.58 469.54 L530.58 470.07 L532.12 470.07 L532.12 470.23 L533.67 470.23 L533.67 469.60 L535.21 469.60 L535.21 469.98 L536.76 469.98 L536.76 469.92 L538.30 469.92 L538.30 470.53 L539.85 470.53 L539.85 470.43 L541.39 470.43 L541.39 469.43 L542.94 469.43 L542.94 469.23 L544.48 469.23 L544.48 469.10 L546.03 469.10 L546.03 467.83 L547.57 467.83 L547.57 467.61 L549.12 467.61 L549.12 466.96 L550.66 466.96 L550.66 467.00 L552.21 467.00 L552.21 465.69 L553.75 465.69 L553.75 465.78 L555.30 465.78 L555.30 464.32 L556.84 464.32 L556.84 463.88 L558.39 463.88 L558.39 463.18 L559.93 463.18 L559.93 462.22 L561.48 462.22 L561.48 461.14 L563.02 461.14 L563.02 460.99 L564.57 460.99 L564.57 460.44 L566.11 460.44 L566.11 459.65 L567.66 459.65 L567.66 459.48 L569.20 459.48 L569.20 459.16 L570.75 459.16 L570.75 458.92 L572.29 458.92 L572.29 458.84 L573.84 458.84 L573.84 458.52 L575.38 458.52 L575.38 458.46 L576.92 458.46 L576.92 458.59 L578.47 458.59 L578.47 458.31 L580.01 458.31 L580.01 458.98 L581.56 458.98 L581.56 459.16 L583.10 459.16 L583.10 459.82 L584.65 459.82 L584.65 460.14 L586.19 460.14 L586.19 461.18 L587.74 461.18 L587.74 461.71 L589.28 461.71 L589.28 462.65 L590.83 462.65 L590.83 462.44 L592.37 462.44 L592.37 463.04 L593.92 463.04 L593.92 463.79 L595.46 463.79 L595.46 463.87 L597.01 463.87 L597.01 463.77 L598.55 463.77 L598.55 464.82 L600.10 464.82 L600.10 464.59 L601.64 464.59 L601.64 465.43 L603.19 465.43 L603.19 465.87 L604.73 465.87 L604.73 466.10 L606.28 466.10 L606.28 467.12 L607.82 467.12 L607.82 467.63 L609.37 467.63 L609.37 468.04 L610.91 468.04 L610.91 467.83 L612.46 467.83 L612.46 468.47 L614.00 468.47 L614.00 468.09 L615.55 468.09 L615.55 468.27 L617.09 468.27 L617.09 468.39 L618.64 468.39 L618.64 468.66 L620.18 468.66 L620.18 468.79 L621.73 468.79 L621.73 469.15 L623.27 469.15 L623.27 469.18 L624.82 469.18 L624.82 469.32 L626.36 469.32 L626.36 468.81 L627.91 468.81 L627.91 469.34 L629.45 469.34 L629.45 469.57 L631.00 469.57 L631.00 470.07 L632.54 470.07 L632.54 469.82 L634.09 469.82 L634.09 470.23 L635.63 470.23 L635.63 470.62 L637.18 470.62 L637.18 471.15 L638.72 471.15 L638.72 471.37 L640.27 471.37 L640.27 471.80 L641.81 471.80 L641.81 472.27 L643.36 472.27 L643.36 473.16 L644.90 473.16 L644.90 473.25 L646.45 473.25 L646.45 473.41 L647.99 473.41 L647.99 472.78 L649.54 472.78 L649.54 472.77 L651.08 472.77 L651.08 473.16 L652.63 473.16 L652.63 473.43 L654.17 473.43 L654.17 472.78 L655.72 472.78 L655.72 472.95 L657.26 472.95 L657.26 472.48 L658.81 472.48 L658.81 472.37 L660.35 472.37 L660.35 471.77 L661.90 471.77 L661.90 471.50 L663.44 471.50 L663.44 471.29 L664.99 471.29 L664.99 471.47 L666.53 471.47 L666.53 471.20 L668.08 471.20 L668.08 471.65 L669.62 471.65 L669.62 471.41 L671.17 471.41 L671.17 471.57 L672.71 471.57 L672.71 471.29 L674.26 471.29 L674.26 471.61 L675.80 471.61 L675.80 471.63 L677.35 471.63 L677.35 471.38 L678.89 471.38 L678.89 471.44 L680.44 471.44 L680.44 471.17 L681.98 471.17 L681.98 471.28 L683.53 471.28 L683.53 471.15 L685.07 471.15 L685.07 471.29 L686.62 471.29 L686.62 471.30 L688.16 471.30 L688.16 471.22 L689.71 471.22 L689.71 471.70 L691.25 471.70 L691.25 471.76 L692.80 471.76 L692.80 471.16 L694.34 471.16 L694.34 471.88 L695.89 471.88 L695.89 470.93 L697.43 470.93 L697.43 470.57 L698.98 470.57 L698.98 470.68 L700.52 470.68 L700.52 469.74 L702.07 469.74 L702.07 469.51 L703.61 469.51 L703.61 469.56 L705.16 469.56 L705.16 469.31 L706.70 469.31 L706.70 469.12 L708.25 469.12 L708.25 469.60 L709.79 469.60 L709.79 469.00 L711.34 469.00 L711.34 468.52 L712.88 468.52 L712.88 467.73 L714.43 467.73 L714.43 467.29 L715.97 467.29 L715.97 466.96 L717.52 466.96 L717.52 466.87 L719.06 466.87 L719.06 466.28 L720.61 466.28 L720.61 466.32 L722.15 466.32 L722.15 466.19 L723.70 466.19 L723.70 466.49 L725.24 466.49 L725.24 466.30 L726.79 466.30 L726.79 465.71 L728.33 465.71 L728.33 465.01 L729.88 465.01 L729.88 464.90 L731.42 464.90 L731.42 464.12 L732.97 464.12 L732.97 464.25 L734.51 464.25 L734.51 464.18 L736.06 464.18 L736.06 464.67 L737.60 464.67 L737.60 465.12 L739.15 465.12 L739.15 465.78 L740.69 465.78 L740.69 466.98 L742.24 466.98 L742.24 467.04 L743.78 467.04 L743.78 467.80 L745.33 467.80 L745.33 468.64 L746.87 468.64 L746.87 469.23 L748.42 469.23 L748.42 469.73 L749.96 469.73 L749.96 470.80 L751.51 470.80 L751.51 470.63 L753.05 470.63 L753.05 471.49 L754.60 471.49 L754.60 472.06 L756.14 472.06 L756.14 472.19 L757.69 472.19 L757.69 472.09 L759.23 472.09 L759.23 472.87 L760.78 472.87 L760.78 472.88 L762.32 472.88 L762.32 473.16 L763.87 473.16 L763.87 474.09 L765.41 474.09 L765.41 474.31 L766.96 474.31 L766.96 474.22 L768.50 474.22 L768.50 474.03 L770.05 474.03 L770.05 473.96 L771.59 473.96 L771.59 474.27 L773.14 474.27 L773.14 477.8 Z M774.68 477.8 L774.68 475.60 L776.23 475.60 L776.23 475.60 L777.77 475.60 L777.77 475.60 L779.32 475.60 L779.32 475.60 L780.86 475.60 L780.86 475.60 L782.41 475.60 L782.41 475.60 L783.95 475.60 L783.95 475.60 L785.50 475.60 L785.50 475.60 L787.04 475.60 L787.04 475.60 L788.59 475.60 L788.59 475.60 L790.13 475.60 L790.13 475.65 L791.68 475.65 L791.68 477.8 Z M793.22 477.8 L793.22 475.84 L794.77 475.84 L794.77 477.8 Z M796.31 477.8 L796.31 476.03 L797.86 476.03 L797.86 476.12 L799.40 476.12 L799.40 476.21 L800.95 476.21 L800.95 476.26 L802.49 476.26 L802.49 476.31 L804.04 476.31 L804.04 476.36 L805.58 476.36 L805.58 476.41 L807.13 476.41 L807.13 476.46 L808.67 476.46 L808.67 476.51 L810.22 476.51 L810.22 476.57 L811.76 476.57 L811.76 476.62 L813.31 476.62 L813.31 476.67 L814.85 476.67 L814.85 476.50 L816.40 476.50 L816.40 475.99 L817.94 475.99 L817.94 475.49 L819.49 475.49 L819.49 475.06 L821.03 475.06 L821.03 474.52 L822.58 474.52 L822.58 474.62 L824.12 474.62 L824.12 474.14 L825.67 474.14 L825.67 472.10 L827.21 472.10 L827.21 469.60 L828.76 469.60 L828.76 467.52 L830.30 467.52 L830.30 465.96 L831.85 465.96 L831.85 465.64 L833.39 465.64 L833.39 462.13 L834.94 462.13 L834.94 458.09 L836.48 458.09 L836.48 454.43 L838.03 454.43 L838.03 451.86 L839.57 451.86 L839.57 450.16 L841.12 450.16 L841.12 449.27 L842.66 449.27 L842.66 447.14 L844.21 447.14 L844.21 443.47 L845.75 443.47 L845.75 442.62 L847.30 442.62 L847.30 442.09 L848.84 442.09 L848.84 440.15 L850.39 440.15 L850.39 439.97 L851.93 439.97 L851.93 438.60 L853.48 438.60 L853.48 438.17 L855.02 438.17 L855.02 438.59 L856.57 438.59 L856.57 438.30 L858.11 438.30 L858.11 438.17 L859.66 438.17 L859.66 438.21 L861.20 438.21 L861.20 438.79 L862.75 438.79 L862.75 439.07 L864.29 439.07 L864.29 439.91 L865.84 439.91 L865.84 440.33 L867.38 440.33 L867.38 442.50 L868.93 442.50 L868.93 443.81 L870.47 443.81 L870.47 445.52 L872.02 445.52 L872.02 446.41 L873.56 446.41 L873.56 447.35 L875.11 447.35 L875.11 449.74 L876.65 449.74 L876.65 450.88 L878.20 450.88 L878.20 453.22 L879.74 453.22 L879.74 454.80 L881.29 454.80 L881.29 456.62 L882.83 456.62 L882.83 458.53 L884.38 458.53 L884.38 459.16 L885.92 459.16 L885.92 460.91 L887.47 460.91 L887.47 462.87 L889.01 462.87 L889.01 464.43 L890.56 464.43 L890.56 465.50 L892.10 465.50 L892.10 467.03 L893.65 467.03 L893.65 467.80 L895.19 467.80 L895.19 468.51 L896.74 468.51 L896.74 468.95 L898.28 468.95 L898.28 469.59 L899.83 469.59 L899.83 469.73 L901.37 469.73 L901.37 471.11 L902.92 471.11 L902.92 471.05 L904.46 471.05 L904.46 470.85 L906.01 470.85 L906.01 471.19 L907.55 471.19 L907.55 470.19 L909.10 470.19 L909.10 470.27 L910.64 470.27 L910.64 469.98 L912.19 469.98 L912.19 470.84 L913.73 470.84 L913.73 471.33 L915.28 471.33 L915.28 471.66 L916.82 471.66 L916.82 471.37 L918.37 471.37 L918.37 471.98 L919.91 471.98 L919.91 472.44 L921.46 472.44 L921.46 472.62 L923.00 472.62 L923.00 473.01 L924.55 473.01 L924.55 473.46 L926.09 473.46 L926.09 473.66 L927.64 473.66 L927.64 473.24 L929.18 473.24 L929.18 473.99 L930.73 473.99 L930.73 473.65 L932.27 473.65 L932.27 474.51 L933.82 474.51 L933.82 474.75 L935.36 474.75 L935.36 474.77 L936.91 474.77 L936.91 475.03 L938.45 475.03 L938.45 475.28 L940.00 475.28 L940.00 475.46 L941.54 475.46 L941.54 475.59 L943.09 475.59 L943.09 475.71 L944.63 475.71 L944.63 475.80 L946.18 475.80 L946.18 477.8 Z"/><rect x="74.8" y="477.5" width="870.7" height="0.8" fill="#c8c8c8" opacity="0.6"/><circle cx="74.7" cy="416" r="6" fill="#fff" filter="url(#sh2)"/><rect x="73.10000000000001" y="413" width="0.9" height="6" fill="#888"/><rect x="75.4" y="413" width="0.9" height="6" fill="#888"/><circle cx="945" cy="416" r="6" fill="#fff" filter="url(#sh2)"/><rect x="943.4" y="413" width="0.9" height="6" fill="#888"/><rect x="945.7" y="413" width="0.9" height="6" fill="#888"/><rect x="379.1" y="267.2" width="238.6" height="73.7" fill="#000" opacity="0.9"/><text x="390.20" y="326.20" font-size="10" font-weight="normal" fill="#e4e4e4" textLength="216.30" lengthAdjust="spacingAndGlyphs" stroke="#e4e4e4" stroke-width="0.2">Feu clic en qualsevol ubicaci&#243; per interactuar</text><g fill="#f0f0f0"><path d="M497.5 286 L497.9 300.6 L501.2 297.5 L504.3 302.9 L506.6 301.7 L503.6 296.4 L510.2 295.2 Z"/></g><g stroke="#e8e8e8" stroke-width="1.1" stroke-linecap="round"><path d="M490.8 283.8 L493.8 284.9"/><path d="M494.5 279.3 L496 281.9"/><path d="M500.1 278.9 L499.4 281.9"/><path d="M501.2 284.1 L504.2 283"/><path d="M491.5 288.6 L494.1 287.5"/></g><rect x="39.1" y="505" width="68.9" height="18.4" fill="#fff" stroke="#cfcfcf" stroke-width="0.8"/><rect x="39.1" y="521.4" width="68.9" height="2" fill="#2f8fd6"/><rect x="112" y="505" width="36.6" height="17.7" fill="#fff" stroke="#bdbdbd" stroke-width="0.9" filter="url(#sh)"/><text x="47.20" y="516.50" font-size="8.6" font-weight="normal" fill="#444" textLength="53.00" lengthAdjust="spacingAndGlyphs" stroke="#444" stroke-width="0.2">Gr&#224;fic en s&#232;rie</text><text x="120.60" y="516.50" font-size="8.6" font-weight="normal" fill="#444" textLength="20.60" lengthAdjust="spacingAndGlyphs" stroke="#444" stroke-width="0.2">Mapa</text>
</svg>
</body></html>
